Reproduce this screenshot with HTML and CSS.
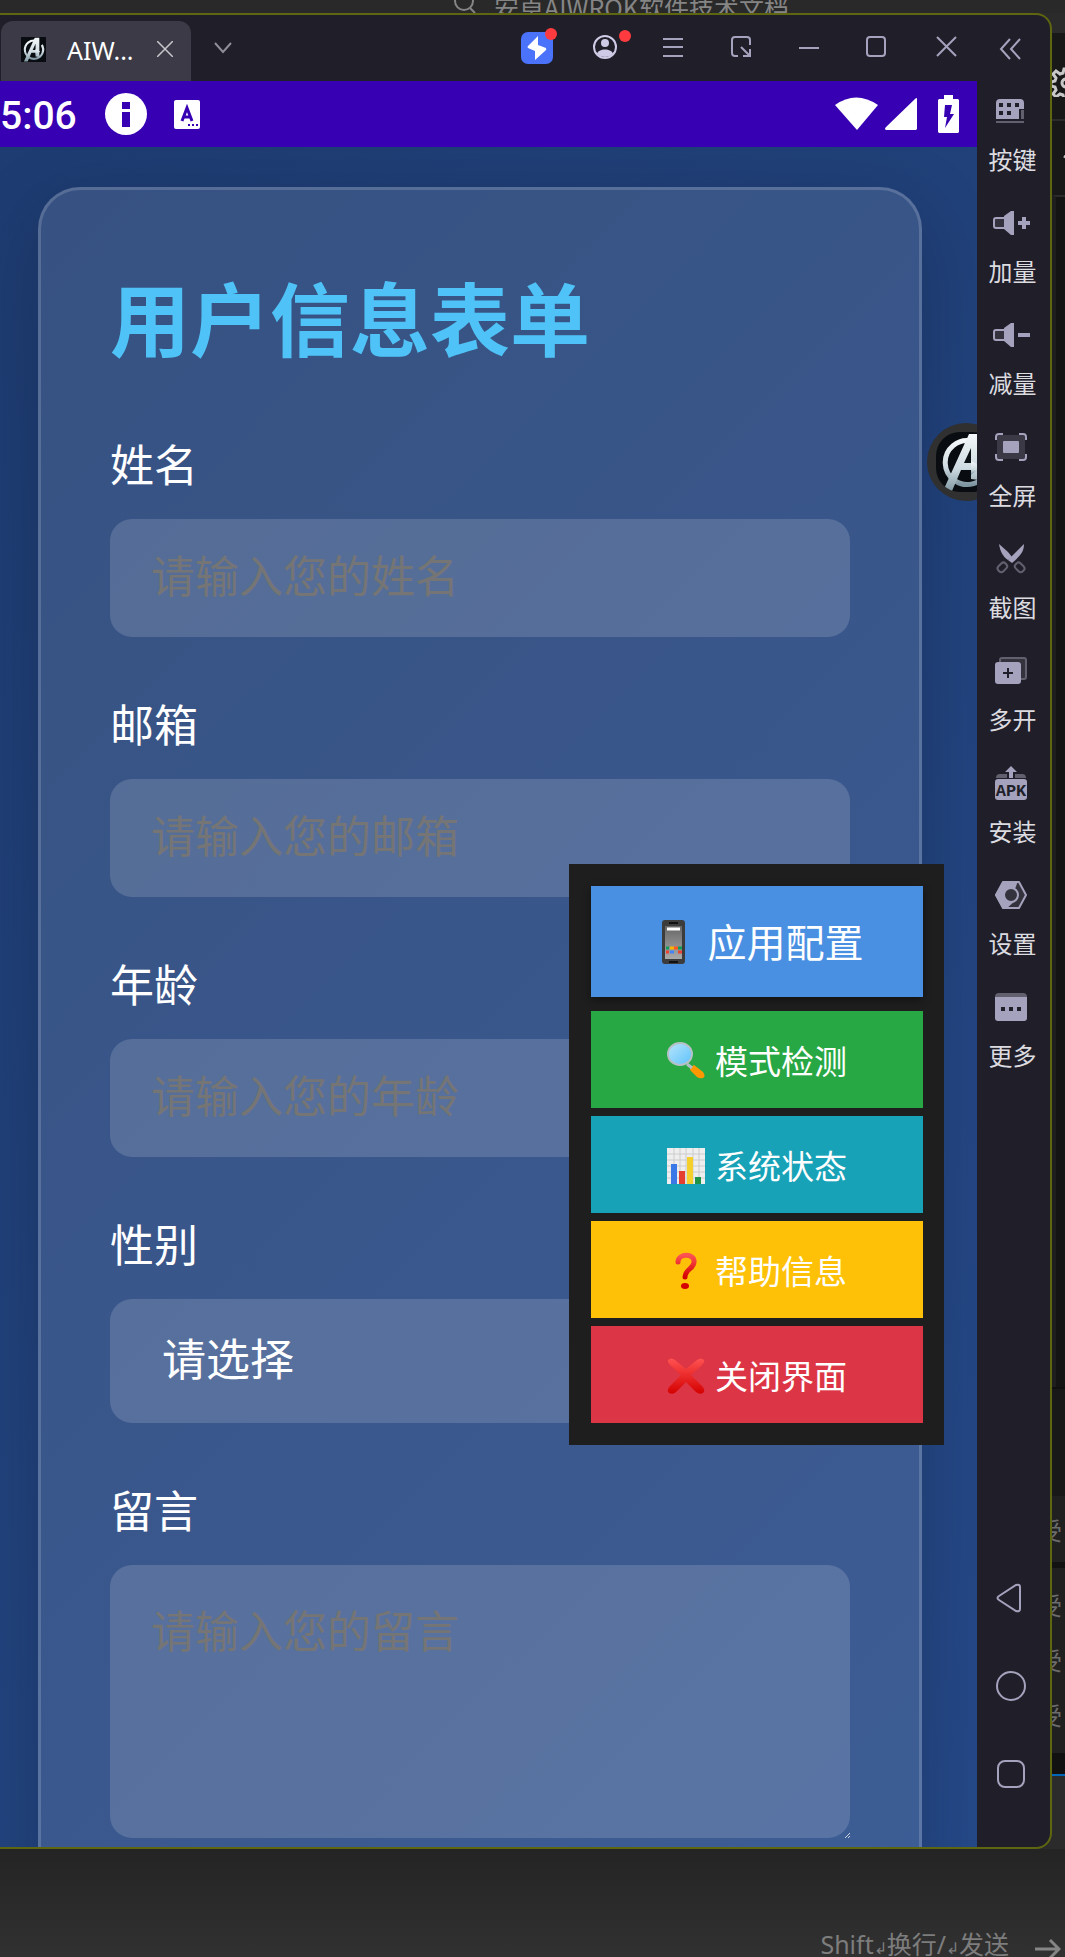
FILE: index.html
```html
<!DOCTYPE html>
<html lang="zh-CN">
<head>
<meta charset="utf-8">
<meta name="viewport" content="width=device-width, initial-scale=1">
<title>用户信息表单</title>
<link rel="stylesheet" href="styles.css">
</head>
<body>
<svg class="defs" width="0" height="0" aria-hidden="true">
  <defs>
    <linearGradient id="steel" x1="0" y1="0" x2="0" y2="1">
      <stop offset="0" stop-color="#f4f8fa"/><stop offset=".6" stop-color="#cfdbe2"/><stop offset="1" stop-color="#7f97a3"/>
    </linearGradient>
    <linearGradient id="red" x1="0" y1="0" x2="0" y2="1">
      <stop offset="0" stop-color="#ff5252"/><stop offset="1" stop-color="#d50000"/>
    </linearGradient>
    <linearGradient id="lens" x1="0" y1="0" x2="1" y2="1">
      <stop offset="0" stop-color="#b9e4fb"/><stop offset="1" stop-color="#5cc3fb"/>
    </linearGradient>
    <linearGradient id="glass" x1="0" y1="0" x2="0" y2="1">
      <stop offset="0" stop-color="#666"/><stop offset="1" stop-color="#aaa"/>
    </linearGradient>
    <symbol id="hero" viewBox="0 0 60 60">
      <rect width="60" height="60" fill="#090c10"/>
      <path d="M36 9A22 22 0 1 0 50 19" fill="none" stroke="url(#steel)" stroke-width="5"/>
      <path d="M33 2h11v46l-9-1V38H25L16 59H7z" fill="url(#steel)"/>
      <path d="M35 16v15h-7z" fill="#0c1116"/>
      <path d="M35 29l11 6-11 8z" fill="url(#steel)"/>
    </symbol>
  </defs>
</svg>

<div class="desktop">
  <header class="desk-top">
    <svg width="22" height="22" viewBox="0 0 22 22"><circle cx="10" cy="10" r="9"/><path d="M16 17l5 5"/></svg>
    <span>安卓AIWROK软件技术文档</span>
  </header>

  <main class="window">
    <div class="titlebar">
      <div class="tab">
        <svg class="tab-logo" width="25" height="25"><use href="#hero"/></svg>
        <span class="tab-name">AIW...</span>
        <button class="bare" aria-label="关闭标签"><svg width="16" height="16" viewBox="0 0 16 16"><path d="M0 0l16 16M16 0L0 16" stroke="#c8c8cc" stroke-width="1.5"/></svg></button>
      </div>
      <button class="bare tab-list" aria-label="标签列表"><svg width="18" height="12" viewBox="0 0 18 12"><path d="M1 1l8 9 8-9" fill="none" stroke="#8e8d98" stroke-width="2"/></svg></button>
      <div class="controls">
        <button class="bare" aria-label="加速"><svg viewBox="0 0 32 32"><rect width="32" height="32" rx="7" fill="#4a72fb"/><path d="M17 4v9l8 3q1 2-1 3L14 28v-9l-7-3q-1-1 0-2z" fill="#fff"/></svg><i class="dot"></i></button>
        <button class="bare" aria-label="账号"><svg viewBox="0 0 32 32"><circle cx="16" cy="15" r="11" fill="none" stroke="#cfcbe6" stroke-width="2"/><circle cx="16" cy="11" r="4" fill="#cfcbe6" stroke="none"/><path d="M8 22c1-6 15-6 16 0a12 12 0 0 1-16 0z" fill="#cfcbe6" stroke="none"/></svg><i class="dot dot-low"></i></button>
        <button class="bare" aria-label="菜单"><svg viewBox="0 0 32 32"><path d="M6 7h20M6 15h20M6 24h20"/></svg></button>
        <button class="bare" aria-label="小窗"><svg viewBox="0 0 32 32"><path d="M13 24h-3q-3 0-3-3V8q0-3 3-3h12q3 0 3 3v5M16 15l9 9M25 17v7h-7"/></svg></button>
        <button class="bare" aria-label="最小化"><svg viewBox="0 0 32 32"><path d="M6 16h20"/></svg></button>
        <button class="bare" aria-label="最大化"><svg viewBox="0 0 32 32"><rect x="6" y="5" width="18" height="19" rx="3"/></svg></button>
        <button class="bare" aria-label="关闭"><svg viewBox="0 0 32 32"><path d="M8 5l19 19M27 5L8 24"/></svg></button>
        <button class="bare" aria-label="收起"><svg viewBox="0 0 32 32"><path d="M13 7l-9 10 9 10M23 7l-9 10 9 10"/></svg></button>
      </div>
    </div>

    <div class="stage">
      <section class="screen">
        <div class="status">
          <time>5:06</time>
          <svg width="42" height="42" viewBox="0 0 42 42"><circle cx="21" cy="21" r="21" fill="#fff"/><path d="M17 9h8v7h-8zM17 19h8v15h-8z" fill="#3700b3"/></svg>
          <svg class="kbd" width="26" height="29" viewBox="0 0 26 29"><rect width="26" height="29" rx="2" fill="#fff"/><path d="M8 21l5-13 5 13M10 17h6" fill="none" stroke="#3700b3" stroke-width="3"/><path d="M14 25h2m2 0h2m2 0h2" stroke="#3700b3" stroke-width="2"/></svg>
          <svg class="wifi" width="43" height="34" viewBox="0 0 43 34"><path d="M0 8Q21-7 43 8L22 33z" fill="#fff"/></svg>
          <svg class="signal" width="32" height="32" viewBox="0 0 32 32"><path d="M1 32q-2-1 0-3L30 1q2-2 2 0v30l-1 1z" fill="#fff"/></svg>
          <svg width="21" height="38" viewBox="0 0 21 38"><path d="M6 0h9v4h5l1 1v32l-1 1H1l-1-1V5l1-1h5z" fill="#fff"/><path d="M7 10h7l-2 9h4L7 33l2-11H6z" fill="#3700b3"/></svg>
        </div>

        <div class="page">
          <form class="card">
            <h1>用户信息表单</h1>
            <div class="field"><label for="name">姓名</label><input id="name" type="text" placeholder="请输入您的姓名"></div>
            <div class="field"><label for="mail">邮箱</label><input id="mail" type="email" placeholder="请输入您的邮箱"></div>
            <div class="field"><label for="age">年龄</label><input id="age" type="text" inputmode="numeric" placeholder="请输入您的年龄"></div>
            <div class="field"><label for="sex">性别</label><select id="sex"><option>请选择</option></select></div>
            <div class="field"><label for="note">留言</label><textarea id="note" placeholder="请输入您的留言"></textarea>
              <svg class="grip" width="5" height="5" viewBox="0 0 5 5"><path d="M0 5l5-5M3 5l2-2" stroke="#d0d6e0"/></svg></div>
          </form>
        </div>

        <button class="bare float-logo" aria-label="悬浮窗"><svg width="60" height="60"><use href="#hero"/></svg></button>

        <div class="popup">
          <button class="act act-main"><svg width="47" height="44" viewBox="0 0 47 44"><rect x="12" width="23" height="44" rx="3" fill="#3c3c3c"/><rect x="15" y="6" width="17" height="33" fill="url(#glass)"/><path d="M17 9h13" stroke="#fff" stroke-width="3"/><path d="M19 3h9M19 42h9" stroke="#111" stroke-width="2"/><path d="M16 28h3m9 0h4" stroke="#0f9d58" stroke-width="3"/><path d="M20 28h4" stroke="#f4b400" stroke-width="3"/><path d="M24 28h4" stroke="#ff5722" stroke-width="3"/><path d="M16 32h3m9 0h4" stroke="#ea4335" stroke-width="3"/><path d="M20 32h4" stroke="#4285f4" stroke-width="3"/></svg>应用配置</button>
          <button class="act act-green"><svg width="38" height="38" viewBox="0 0 38 38"><path d="M24 25l3-2 9 7q3 4 0 6-3 1-6-1l-7-7z" fill="#ff9800"/><path d="M20 22l5 4" stroke="#b0bec5" stroke-width="3"/><ellipse cx="13" cy="12" rx="12" ry="11" fill="url(#lens)" stroke="#b6c1c7" stroke-width="2"/></svg>模式检测</button>
          <button class="act act-teal"><svg width="38" height="38" viewBox="0 0 38 38"><path d="M0 1h38v36H0z" fill="#eee"/><path d="M0 7h38M0 13h38M0 19h38M0 25h38M0 31h38M7 1v36M13 1v36M19 1v36M26 1v36M32 1v36" stroke="#ccc"/><path d="M4 17h6v20H4z" fill="#3b78e7"/><path d="M12 24h6v13h-6z" fill="#e53d2f"/><path d="M20 10h6v27h-6z" fill="#f5cf2b"/><path d="M28 30h6v7h-6z" fill="#1e9246"/></svg>系统状态</button>
          <button class="act act-amber"><svg width="38" height="38" viewBox="0 0 38 38"><path d="M11 10C11 1 28 1 27 10c0 7-9 7-9 15" fill="none" stroke="url(#red)" stroke-width="5" stroke-linecap="round"/><ellipse cx="18" cy="34" rx="4" ry="3" fill="#d50000"/></svg>帮助信息</button>
          <button class="act act-red"><svg width="38" height="38" viewBox="0 0 38 38"><path d="M1 3Q4 0 8 3l11 9L30 3q4-3 7 0 1 2-2 5L24 18l11 11q4 4 1 7-3 2-7-1L19 25 9 35q-3 3-7 1-3-3 1-7l11-11L3 8Q0 5 1 3z" fill="url(#red)"/></svg>关闭界面</button>
        </div>
      </section>

      <nav class="tools">
        <button class="bare tool"><svg viewBox="0 0 32 32"><path d="M1 8q0-4 4-4h20q4 0 4 4v6h-5v10H1z" fill="#a5a2bd"/><path d="M26 15h3v9h-3zM1 26h28v2H1z" fill="#62606f"/><path d="M4 8h4v4H4zM12 8h4v4h-4zM20 8h4v4h-4zM4 16h4v4H4zM12 16h4v4h-4z" fill="#201f29"/></svg>按键</button>
        <button class="bare tool"><svg viewBox="0 0 32 32"><path d="M9 11H1q-2 0-2 2v6q0 2 2 2h8" fill="#34333d" stroke="#a5a2bd" stroke-width="2"/><path d="M9 9l7-5h3v24h-3l-7-6z" fill="#a5a2bd"/><path d="M23 16h12M29 10v12" stroke="#a5a2bd" stroke-width="4"/></svg>加量</button>
        <button class="bare tool"><svg viewBox="0 0 32 32"><path d="M9 11H1q-2 0-2 2v6q0 2 2 2h8" fill="#34333d" stroke="#a5a2bd" stroke-width="2"/><path d="M9 9l7-5h3v24h-3l-7-6z" fill="#a5a2bd"/><path d="M23 16h12" stroke="#a5a2bd" stroke-width="4"/></svg>减量</button>
        <button class="bare tool"><svg viewBox="0 0 32 32"><rect x="2" y="4" width="28" height="24" rx="3" fill="#3a3945"/><rect x="8" y="10" width="16" height="12" rx="1" fill="#a5a2bd"/><path d="M1 9V6q0-3 3-3h4M24 3h4q3 0 3 3v3M31 23v3q0 3-3 3h-4M8 29H4q-3 0-3-3v-3" fill="none" stroke="#a5a2bd" stroke-width="2"/></svg>全屏</button>
        <button class="bare tool"><svg viewBox="0 0 32 32"><path d="M4 1l9 8 4 5-4 3C7 13 5 7 4 1z" fill="#a5a2bd"/><path d="M29 1c0 8-4 12-12 19l-4-3z" fill="#a5a2bd"/><rect x="4" y="19" width="7" height="10" rx="3" transform="rotate(45 7 24)" fill="none" stroke="#62606f" stroke-width="2"/><rect x="21" y="19" width="7" height="10" rx="3" transform="rotate(-45 25 24)" fill="none" stroke="#62606f" stroke-width="2"/></svg>截图</button>
        <button class="bare tool"><svg viewBox="0 0 32 32"><rect x="5" y="3" width="26" height="21" rx="2" fill="#34333d" stroke="#62606f" stroke-width="2"/><rect y="7" width="26" height="22" rx="3" fill="#a5a2bd"/><path d="M8 18h10M13 13v10" stroke="#201f29" stroke-width="2"/></svg>多开</button>
        <button class="bare tool"><svg viewBox="0 0 32 32"><path d="M1 11q0-4 4-4h7v4zM20 7h7q4 0 4 4H20z" fill="#62606f"/><path d="M16-1l6 6h-4v6h-4V5h-4z" fill="#a5a2bd"/><rect y="12" width="32" height="21" rx="3" fill="#a5a2bd"/><text x="16" y="29" class="apk">APK</text></svg>安装</button>
        <button class="bare tool"><svg viewBox="0 0 32 32"><path d="M8 3h16l7 13-7 13H8L1 16z" fill="#34333d" stroke="#a5a2bd" stroke-width="2" stroke-linejoin="round"/><path d="M8 2h15l-3 8v12l-9 8H8L0 16z" fill="#a5a2bd"/><circle cx="16" cy="16" r="7" fill="#34333d" stroke="#a5a2bd" stroke-width="2"/></svg>设置</button>
        <button class="bare tool"><svg viewBox="0 0 32 32"><path d="M0 6q0-4 4-4h24q4 0 4 4z" fill="#62606f"/><path d="M0 6h32v21q0 3-3 3H3q-3 0-3-3z" fill="#a5a2bd"/><path d="M6 16h4v4H6zM14 16h4v4h-4zM22 16h4v4h-4z" fill="#201f29"/></svg>更多</button>
        <div class="keys">
          <button class="bare" aria-label="返回"><svg viewBox="0 0 32 32"><path d="M4 14L21 3q4-1 4 2v22q0 3-4 2L4 18q-3-2 0-4z"/></svg></button>
          <button class="bare" aria-label="主页"><svg viewBox="0 0 32 32"><circle cx="16" cy="16" r="14"/></svg></button>
          <button class="bare" aria-label="最近任务"><svg viewBox="0 0 32 32"><rect x="3" y="3" width="26" height="26" rx="7"/></svg></button>
        </div>
      </nav>
    </div>
  </main>

  <aside class="editor">
    <div class="gap-top"></div>
    <div class="pane pane-head"><svg width="30" height="30" viewBox="0 0 30 30"><path d="M15 2l3 0 1 4 3 1 4-3 2 3-3 4 1 3 4 1v4l-4 1-1 3 3 4-3 3-4-3-3 1-1 4h-4l-1-4-3-1-4 3-3-3 3-4-1-3-4-1v-4l4-1 1-3-3-4 3-3 4 3 3-1 1-4z"/><circle cx="15" cy="16" r="4"/></svg></div>
    <div class="pane pane-sub"><svg class="caret" width="8" height="6" viewBox="0 0 8 6"><path d="M1 1l7 4" stroke="#c8c8c8" stroke-width="3"/></svg></div>
    <div class="pane pane-code"></div>
    <div class="pane pane-low"></div>
    <div class="pane pane-one"><span>受</span></div>
    <div class="pane pane-list"><span>受</span><span>受</span><span>受</span></div>
    <div class="pane pane-end"></div>
    <div class="pane-rest"></div>
  </aside>

  <footer class="desk-foot"><span>Shift<small>↲</small>换行/<small>↲</small>发送</span><svg width="26" height="24" viewBox="0 0 26 24"><path d="M0 12h24M15 3l9 9-9 9"/></svg></footer>
</div>
</body>
</html>
```
FILE: styles.css
```css
* { box-sizing: border-box; }
body {
  margin: 0;
  background: #2b2b2b;
  font-family: "Noto Sans", "Noto Sans CJK SC", sans-serif;
}
svg { display: block; flex: none; }
.defs { position: absolute; }
.bare {
  padding: 0;
  border: 0;
  background: none;
  color: inherit;
  font: inherit;
  cursor: pointer;
}

.desktop {
  display: grid;
  grid-template: 13px minmax(0, 1fr) 108px / minmax(0, 1fr) 13px;
  height: 100vh;
  overflow: hidden;
}
.desk-top {
  grid-column: 1 / 3;
  display: flex;
  align-items: flex-end;
  justify-content: center;
  gap: 18px;
  padding-left: 178px;
  overflow: hidden;
  color: #858585;
  font: 25px/32px "Noto Sans CJK SC", sans-serif;
  background: #292929;
}
.desk-top svg { fill: none; stroke: #858585; stroke-width: 2; }
.desk-top span { margin-bottom: -10px; }
.desk-foot {
  grid-column: 1 / 3;
  display: flex;
  align-items: flex-end;
  justify-content: flex-end;
  gap: 26px;
  padding-right: 4px;
  overflow: hidden;
  color: #7d7d7d;
  font-size: 25px;
  line-height: 36px;
  background: linear-gradient(#242424, #313131);
}
.desk-foot span { margin-bottom: -9px; }
.desk-foot small { font-size: 16px; }
.desk-foot svg { fill: none; stroke: #858585; stroke-width: 3; margin-bottom: -4px; }

.window {
  display: flex;
  flex-direction: column;
  min-height: 0;
  border: 2px solid #5f6610;
  border-left: 0;
  border-radius: 0 16px 16px 0;
  background: #201f29;
  overflow: hidden;
}
.titlebar { display: flex; flex: none; align-items: center; height: 66px; }
.tab {
  display: flex;
  align-self: flex-end;
  align-items: center;
  gap: 21px;
  width: 190px;
  height: 60px;
  margin-left: 1px;
  padding: 0 18px 4px 20px;
  border-radius: 12px 12px 0 0;
  background: #3b3a46;
}
.tab-name { flex: 1; padding-top: 2px; color: #fff; font-size: 25px; line-height: 32px; }
.tab-list { margin-left: 23px; }
.controls {
  display: flex;
  gap: 36px;
  margin-left: auto;
  padding-right: 21px;
}
.controls .bare { position: relative; width: 32px; height: 32px; }
.controls svg, .keys svg {
  width: 32px;
  height: 32px;
  fill: none;
  stroke: #a5a2bd;
  stroke-width: 2;
}
.controls .bare:first-child svg { stroke: none; }
.dot {
  position: absolute;
  top: -4px;
  right: -4px;
  width: 12px;
  height: 12px;
  border-radius: 50%;
  background: #ff3b3f;
}
.dot-low { top: -2px; right: -10px; }

.stage { display: flex; flex: 1; min-height: 0; }
.screen {
  position: relative;
  display: flex;
  flex-direction: column;
  flex: 1;
  min-width: 0;
  overflow: hidden;
}
.status {
  display: flex;
  flex: none;
  align-items: center;
  height: 66px;
  padding-right: 18px;
  background: #3700b3;
}
.status time {
  width: 105px;
  padding-top: 3px;
  color: #fff;
  font: 500 39px/48px Roboto, sans-serif;
}
.kbd { margin-left: 27px; }
.wifi { margin-left: auto; }
.signal { margin: 0 21px 0 7px; }

.page {
  flex: 1;
  min-height: 0;
  padding: 40px 55px 0 38px;
  background: linear-gradient(135deg, #1e3c72, #2a5298) 0 0 / 100% 3600px;
  overflow: hidden;
}
.card {
  padding: 69px;
  border: 3px solid rgba(255, 255, 255, .16);
  border-radius: 42px;
  background: rgba(255, 255, 255, .11);
  box-shadow: 0 22px 80px rgba(0, 0, 0, .2);
}
h1 {
  margin: 4px 0 58px;
  color: #4fc3f7;
  font-size: 80px;
  line-height: 112px;
  font-weight: 700;
}
.field { position: relative; display: grid; gap: 22px; margin-bottom: 56px; }
.field label { color: #fff; font-size: 44px; line-height: 64px; }
.field input, .field select, .field textarea {
  display: block;
  width: 100%;
  height: 118px;
  margin: 0;
  padding: 0 41px 4px;
  border: 0;
  border-radius: 22px;
  background: rgba(255, 255, 255, .15);
  color: #fff;
  font: inherit;
  font-size: 44px;
  appearance: none;
}
.field select { height: 124px; padding: 0 52px 4px; }
.field textarea { height: 273px; padding: 40px 41px; line-height: 52px; resize: none; }
.field ::placeholder { color: #757575; }
.grip { position: absolute; right: 0; bottom: 0; }

.float-logo {
  position: absolute;
  top: 342px;
  right: -28px;
  width: 78px;
  height: 78px;
  padding: 9px;
  border-radius: 50%;
  background: #303030;
}
.float-logo svg { border-radius: 24px; }

.popup {
  position: absolute;
  top: 783px;
  right: 33px;
  display: grid;
  gap: 8px;
  width: 375px;
  padding: 22px 21px 22px 22px;
  background: #1e1e1e;
}
.act {
  display: flex;
  align-items: center;
  justify-content: center;
  gap: 10px;
  height: 97px;
  padding: 0;
  border: 0;
  color: #fff;
  font: inherit;
  font-size: 33px;
}
.act svg { margin-top: 2px; }
.act-main {
  height: 111px;
  margin-bottom: 6px;
  padding-bottom: 3px;
  background: #4a90e2;
  box-shadow: 0 3px 8px rgba(0, 0, 0, .4);
  font-size: 39px;
}
.act-main svg { margin-top: 4px; }
.act-green { background: #28a745; }
.act-teal { background: #17a2b8; }
.act-amber { background: #ffc107; }
.act-red { background: #dc3545; }

.tools {
  display: flex;
  flex-direction: column;
  align-items: center;
  gap: 30px;
  width: 73px;
  padding: 14px 2px 57px 0;
  color: #dcdce0;
}
.tool {
  display: grid;
  justify-items: center;
  gap: 16px;
  font-size: 24px;
  line-height: 34px;
}
.tool svg { width: 32px; height: 32px; overflow: visible; margin-right: 4px; }
.apk {
  fill: #201f29;
  font: 700 17px/18px "Liberation Mono", monospace;
  text-anchor: middle;
}
.keys { display: grid; gap: 56px; margin-top: auto; }
.keys svg { margin-right: 4px; }

.editor { display: flex; flex-direction: column; min-width: 0; overflow: hidden; }
.gap-top { height: 18px; background: #2b2b2b; }
.pane {
  display: flex;
  flex-direction: column;
  align-items: flex-end;
  justify-content: center;
  background: #181818;
  border-top: 2px solid #2b2b2b;
}
.pane-head { height: 88px; }
.pane-head svg { margin-right: -16px; margin-top: 12px; fill: none; stroke: #c8c8c8; stroke-width: 3; }
.pane-sub { height: 76px; }
.caret { margin-right: -6px; }
.pane-code { flex: 1; border-left: 4px solid #1e1e1e; background: #141414; }
.pane-low { height: 109px; background: #181818; border-color: #101010; }
.pane-one { height: 66px; background: #202020; border-color: #202020; }
.pane-list { height: 191px; border-top: 6px solid #121212; background: #202020; }
.pane-one span, .pane-list span {
  padding-right: 3px;
  color: #6c6c6c;
  font-size: 24px;
  line-height: 55px;
  white-space: nowrap;
}
.pane-end { height: 21px; border: 0; background: #111; }
.pane-rest { height: 75px; border-top: 2px solid #0066b8; background: #2b2b2b; }
```
